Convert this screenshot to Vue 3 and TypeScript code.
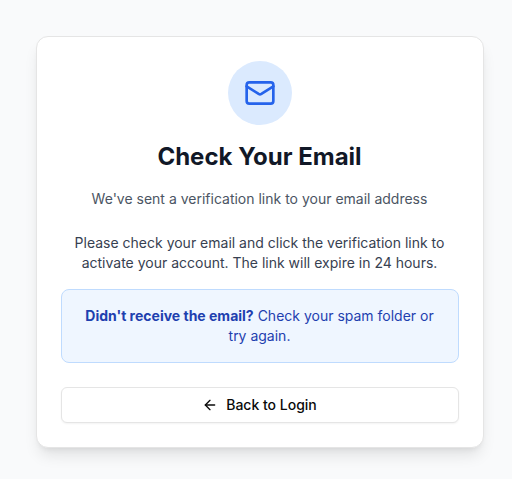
<script setup lang="ts">
const title: string = 'Check Your Email'
</script>

<template>
  <main class="page">
    <section class="card">
      <header class="header">
        <div class="badge">
          <svg class="mail" viewBox="0 0 24 24" fill="none" stroke="currentColor" stroke-width="2" stroke-linecap="round" stroke-linejoin="round">
            <path d="m22 7-8.991 5.727a2 2 0 0 1-2.009 0L2 7" />
            <rect x="2" y="4" width="20" height="16" rx="2" />
          </svg>
        </div>
        <h1 class="title">{{ title }}</h1>
        <p class="subtitle">We've sent a verification link to your email address</p>
      </header>
      <div class="content">
        <p class="instructions">Please check your email and click the verification link to activate your account. The link will expire in 24 hours.</p>
        <div class="notice">
          <p><strong>Didn't receive the email?</strong> Check your spam folder or try again.</p>
        </div>
        <button class="back" type="button">
          <svg class="arrow" viewBox="0 0 24 24" fill="none" stroke="currentColor" stroke-width="2" stroke-linecap="round" stroke-linejoin="round">
            <path d="m12 19-7-7 7-7" />
            <path d="M19 12H5" />
          </svg>
          Back to Login
        </button>
      </div>
    </section>
  </main>
</template>

<style>
body {
  margin: 0;
}
</style>

<style scoped>
.page {
  box-sizing: border-box;
  min-height: 479px;
  padding: 36px 28px 31px 35.5px;
  background: #f9fafb;
  font-family: Inter, "Liberation Sans", sans-serif;
  font-size: 14px;
  line-height: 20px;
}
.card {
  box-sizing: border-box;
  width: 448px;
  height: 412px;
  padding: 24px;
  border: 1px solid #e5e5e5;
  border-radius: 12px;
  background: #fff;
  box-shadow: 0 10px 15px -3px rgb(0 0 0 / 10%), 0 4px 6px -4px rgb(0 0 0 / 10%);
}
.header,
.content {
  display: flex;
  flex-direction: column;
  text-align: center;
}
.badge {
  display: flex;
  align-items: center;
  justify-content: center;
  align-self: center;
  width: 64px;
  height: 64px;
  border-radius: 50%;
  background: #dbeafe;
}
.mail {
  width: 32px;
  height: 32px;
  color: #2563eb;
}
p {
  margin: 0;
}
.title {
  margin: 16px 0 0;
  color: #111827;
  font-size: 24px;
  font-weight: 700;
  line-height: 32px;
}
.subtitle {
  margin-top: 16px;
  color: #4b5563;
}
.content {
  padding-top: 24px;
}
.instructions {
  color: #374151;
}
.notice {
  margin-top: 16px;
  padding: 16px;
  border: 1px solid #bfdbfe;
  border-radius: 8px;
  background: #eff6ff;
  color: #1e40af;
}
.back {
  display: flex;
  align-items: center;
  justify-content: center;
  gap: 8px;
  height: 36px;
  margin-top: 24px;
  border: 1px solid #e5e5e5;
  border-radius: 6px;
  background: #fff;
  box-shadow: 0 1px 2px rgb(0 0 0 / 5%);
  color: #0a0a0a;
  font: 500 14px/20px Inter, "Liberation Sans", sans-serif;
}
.arrow {
  width: 16px;
  height: 16px;
}
</style>
